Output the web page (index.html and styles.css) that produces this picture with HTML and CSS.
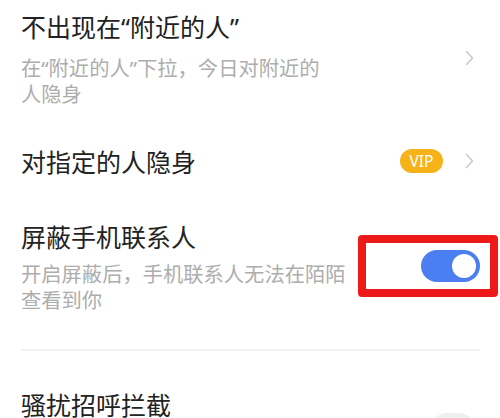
FILE: index.html
```html
<!DOCTYPE html>
<html lang="zh-CN">
<head>
<meta charset="utf-8">
<link rel="stylesheet" href="styles.css">
</head>
<body>
<div class="list">
  <div class="row row-1">
    <div class="text">
      <div class="title">不出现在<span class="q">“</span>附近的人<span class="q">”</span></div>
      <div class="sub">在<span class="q">“</span>附近的人<span class="q">”</span>下拉，今日对附近的<br>人隐身</div>
    </div>
    <svg class="chev" viewBox="0 0 20 20" width="20" height="20"><path d="M6.5 3.5 L12.5 10 L6.5 16.5" fill="none" stroke="#c9c9c9" stroke-width="1.6" stroke-linecap="round" stroke-linejoin="round"/></svg>
  </div>
  <div class="row row-2">
    <div class="text">
      <div class="title">对指定的人隐身</div>
    </div>
    <span class="vip">VIP</span>
    <svg class="chev" viewBox="0 0 20 20" width="20" height="20"><path d="M6.5 3.5 L12.5 10 L6.5 16.5" fill="none" stroke="#c9c9c9" stroke-width="1.6" stroke-linecap="round" stroke-linejoin="round"/></svg>
  </div>
  <div class="row row-3">
    <div class="text">
      <div class="title">屏蔽手机联系人</div>
      <div class="sub">开启屏蔽后，手机联系人无法在陌陌<br>查看到你</div>
    </div>
    <div class="toggle on">
      <span class="knob"></span>
      <span class="mark"></span>
    </div>
  </div>
  <div class="divider"></div>
  <div class="row row-4">
    <div class="text">
      <div class="title">骚扰招呼拦截</div>
    </div>
    <div class="toggle off"><span class="knob"></span></div>
  </div>
</div>
</body>
</html>
```
FILE: styles.css
```css
html, body {
  margin: 0;
  padding: 0;
  background: #ffffff;
}
body {
  width: 500px;
  height: 418px;
  overflow: hidden;
  font-family: "Noto Sans CJK SC", "Noto Sans", sans-serif;
}
.list {
  padding: 0 20px 0 21px;
}
.row {
  display: flex;
  align-items: center;
}
.text {
  flex: 1;
  min-width: 0;
}
.title {
  font-size: 25px;
  line-height: 32px;
  color: #222222;
}
.sub {
  font-size: 20.3px;
  line-height: 26px;
  color: #adadad;
  margin-top: 12px;
}
.q {
  font-family: "Noto Sans", sans-serif;
  line-height: 0;
}
.row-1 {
  padding: 10px 0 16px;
}
.row-2 {
  padding: 17px 0 19px;
  min-height: 44px;
}
.row-3 {
  padding: 18px 0 37px;
}
.row-3 .sub {
  margin-top: 8px;
}
.row-4 {
  padding-top: 37px;
  align-items: flex-start;
}
.chev {
  flex: none;
  display: block;
}
.vip {
  flex: none;
  width: 43px;
  height: 24px;
  border-radius: 12px;
  background: #f6b219;
  color: #ffffff;
  font-family: "Noto Sans", sans-serif;
  font-size: 15.5px;
  line-height: 24px;
  text-align: center;
  margin-right: 17px;
}
.toggle {
  flex: none;
  position: relative;
  width: 59px;
  height: 32px;
  border-radius: 16px;
}
.toggle.on {
  background: #4b7ef1;
}
.toggle.off {
  background: #efefef;
  margin-top: 25px;
  width: 44px;
  margin-right: 5px;
}
.knob {
  position: absolute;
  top: 4px;
  right: 4px;
  width: 24px;
  height: 24px;
  border-radius: 50%;
  background: #ffffff;
}
.toggle.off .knob {
  display: none;
}
.mark {
  position: absolute;
  left: -63px;
  top: -15px;
  width: 140px;
  height: 62px;
  box-sizing: border-box;
  border: 8px solid #ee1a1a;
  border-radius: 4px;
}
.divider {
  height: 2px;
  background: #f3f3f3;
}
```
